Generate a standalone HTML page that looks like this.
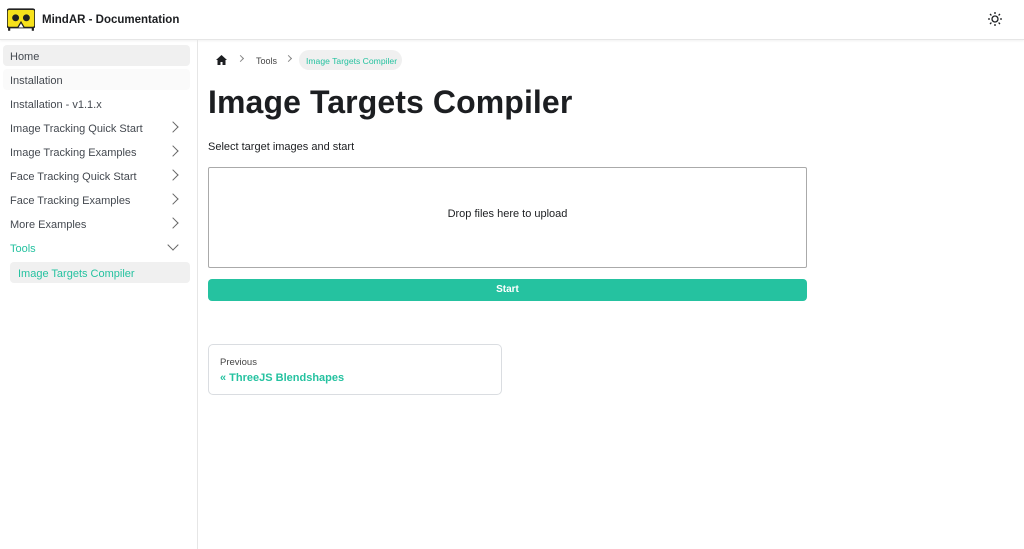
<!DOCTYPE html>
<html><head><meta charset="utf-8"><style>
*{box-sizing:border-box;margin:0;padding:0}
body{width:1024px;height:549px;overflow:hidden;font-family:"Liberation Sans",sans-serif;background:#fff;color:#1c1e21;position:relative}
.hdr{position:absolute;left:0;top:0;width:1024px;height:40px;border-bottom:1px solid #e6e6e6;box-shadow:0 1px 2px rgba(0,0,0,.06)}
.logo{position:absolute;left:7px;top:8px;width:28px;height:24px}
.brand{position:absolute;left:42px;top:14px;font-size:11.5px;font-weight:bold;color:#1c1e21}
.side{position:absolute;left:0;top:40px;width:198px;height:509px;border-right:1px solid #e6e6e6}
.it{position:absolute;left:3px;width:187px;height:21px;border-radius:4px;font-size:11px;color:#444950;padding:6px 0 0 7px}
.chev{position:absolute;right:13px;top:6px;width:8px;height:8px;border-right:1.8px solid #666;border-top:1.8px solid #666;transform:rotate(45deg)}
.main{position:absolute;left:208px}
.bc{position:absolute;top:56px;width:5px;height:5px;border-right:1.2px solid #888;border-top:1.2px solid #888;transform:rotate(45deg)}
</style></head><body>
<div class="hdr">
<svg class="logo" viewBox="0 0 26 22"><rect x="0" y="1" width="26" height="17" rx="2" fill="#f7e11b" stroke="#222" stroke-width="1.5"/><circle cx="8" cy="9" r="3.2" fill="#222"/><circle cx="18" cy="9" r="3.2" fill="#222"/><path d="M10 18 L13 13 L16 18" fill="#fff" stroke="#222" stroke-width="1.2"/><rect x="1" y="18" width="2" height="3" fill="#222"/><rect x="23" y="18" width="2" height="3" fill="#222"/></svg>
<div class="brand">MindAR - Documentation</div>
<svg style="position:absolute;left:987px;top:11px" width="16" height="16" viewBox="0 0 16 16" fill="none" stroke="#1c1e21" stroke-width="1.3"><circle cx="8" cy="8" r="3"/><path d="M8 1v2M8 13v2M1 8h2M13 8h2M3 3l1.4 1.4M11.6 11.6L13 13M3 13l1.4-1.4M11.6 4.4L13 3"/></svg>
</div>
<div class="side">
<div class="it" style="top:5px;background:#f0f0f0">Home</div>
<div class="it" style="top:29px;background:#fafafa">Installation</div>
<div class="it" style="top:53px">Installation - v1.1.x</div>
<div class="it" style="top:77px">Image Tracking Quick Start<span class="chev"></span></div>
<div class="it" style="top:101px">Image Tracking Examples<span class="chev"></span></div>
<div class="it" style="top:125px">Face Tracking Quick Start<span class="chev"></span></div>
<div class="it" style="top:149px">Face Tracking Examples<span class="chev"></span></div>
<div class="it" style="top:173px">More Examples<span class="chev"></span></div>
<div class="it" style="top:197px;color:#25c2a0">Tools<span class="chev" style="transform:rotate(135deg);top:4px"></span></div>
<div class="it" style="top:222px;left:10px;width:180px;background:#f0f0f0;color:#25c2a0;padding-left:8px">Image Targets Compiler</div>
</div>
<svg style="position:absolute;left:216px;top:55px" width="11" height="10" viewBox="0 0 11 10"><path d="M5.5 0L0 5h1.5v5h3V7h2v3h3V5H11z" fill="#1c1e21"/></svg>
<div class="bc" style="left:238px"></div>
<div style="position:absolute;left:256px;top:56px;font-size:9px;color:#444">Tools</div>
<div class="bc" style="left:286px"></div>
<div style="position:absolute;left:299px;top:50px;height:20px;width:103px;border-radius:10px;background:#f0f0f0;color:#25c2a0;font-size:8.6px;padding:6px 0 0 7px">Image Targets Compiler</div>
<div class="main" style="top:84px;font-size:32px;font-weight:bold;letter-spacing:0.1px">Image Targets Compiler</div>
<div class="main" style="top:141px;font-size:11px">Select target images and start</div>
<div class="main" style="top:167px;width:599px;height:101px;border:1px solid #aaa;border-radius:2px;font-size:11px;text-align:center;padding-top:40px">Drop files here to upload</div>
<div class="main" style="top:279px;width:599px;height:22px;background:#25c2a0;border-radius:4px;color:#fff;font-size:10px;font-weight:bold;text-align:center;padding-top:5px">Start</div>
<div class="main" style="top:344px;width:294px;height:51px;border:1px solid #dadde1;border-radius:5px;padding:12px 0 0 11px">
<div style="font-size:9.5px;color:#444">Previous</div>
<div style="font-size:11px;font-weight:bold;color:#25c2a0;margin-top:4px">« ThreeJS Blendshapes</div>
</div>
</body></html>
